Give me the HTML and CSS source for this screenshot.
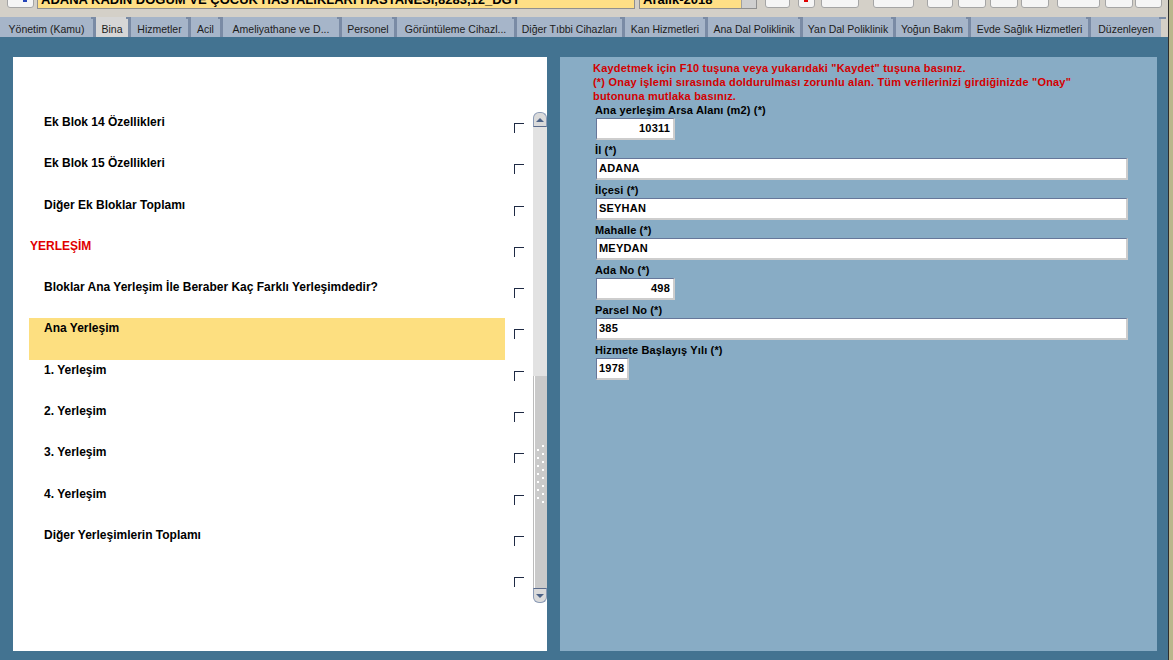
FILE: index.html
```html
<!DOCTYPE html>
<html lang="tr">
<head>
<meta charset="utf-8">
<title>Bina</title>
<link rel="stylesheet" href="styles.css">
</head>
<body>
<div class="app">
  <div class="work">
    <div class="toolbar">
      <div class="tb-btn tb-a"><span class="ico-blue"></span></div>
      <div class="tb-field tb-name">ADANA KADIN DOĞUM VE ÇOCUK HASTALIKLARI HASTANESİ,8283,12_DGY</div>
      <div class="tb-field tb-period"><span class="tb-val">Aralık-2018</span><span class="tb-drop"></span></div>
      <div class="tb-btn tb-b1"></div>
      <div class="tb-btn tb-b2"><span class="ico-red"></span></div>
      <div class="tb-btn tb-b3"></div>
      <div class="tb-btn tb-b4"></div>
      <div class="tb-btn tb-b5"><span class="ico-bar"></span></div>
      <div class="tb-btn tb-b6"><span class="ico-bar"></span></div>
      <div class="tb-btn tb-b7"></div>
      <div class="tb-btn tb-b8"></div>
      <div class="tb-btn tb-b9"></div>
      <div class="tb-btn tb-b10"></div>
      <div class="tb-btn tb-b11"></div>
    </div>
    <div class="tabbar">
      <div class="tabs">
        <div class="tab">Yönetim (Kamu)</div>
        <div class="tab tab-active">Bina</div>
        <div class="tab">Hizmetler</div>
        <div class="tab">Acil</div>
        <div class="tab">Ameliyathane ve D...</div>
        <div class="tab">Personel</div>
        <div class="tab">Görüntüleme Cihazl...</div>
        <div class="tab">Diğer Tıbbi Cihazları</div>
        <div class="tab">Kan Hizmetleri</div>
        <div class="tab">Ana Dal Poliklinik</div>
        <div class="tab">Yan Dal Poliklinik</div>
        <div class="tab">Yoğun Bakım</div>
        <div class="tab">Evde Sağlık Hizmetleri</div>
        <div class="tab">Düzenleyen</div>
      </div>
    </div>
    <div class="main">
      <section class="left-panel">
        <div class="list">
          <div class="row"><span class="row-label">Ek Blok 14 Özellikleri</span><span class="chk"></span></div>
          <div class="row"><span class="row-label">Ek Blok 15 Özellikleri</span><span class="chk"></span></div>
          <div class="row"><span class="row-label">Diğer Ek Bloklar Toplamı</span><span class="chk"></span></div>
          <div class="row"><span class="row-label row-section">YERLEŞİM</span><span class="chk"></span></div>
          <div class="row"><span class="row-label">Bloklar Ana Yerleşim İle Beraber Kaç Farklı Yerleşimdedir?</span><span class="chk"></span></div>
          <div class="row"><span class="row-label row-active">Ana Yerleşim</span><span class="chk"></span></div>
          <div class="row"><span class="row-label">1. Yerleşim</span><span class="chk"></span></div>
          <div class="row"><span class="row-label">2. Yerleşim</span><span class="chk"></span></div>
          <div class="row"><span class="row-label">3. Yerleşim</span><span class="chk"></span></div>
          <div class="row"><span class="row-label">4. Yerleşim</span><span class="chk"></span></div>
          <div class="row"><span class="row-label">Diğer Yerleşimlerin Toplamı</span><span class="chk"></span></div>
          <div class="row"><span class="row-label"></span><span class="chk"></span></div>
        </div>
        <div class="scrollbar">
          <div class="sb-btn sb-up"><span class="tri-up"></span></div>
          <div class="sb-track"></div>
          <div class="sb-thumb"><div class="grip"></div></div>
          <div class="sb-btn sb-down"><span class="tri-down"></span></div>
        </div>
      </section>
      <section class="right-panel">
        <p class="notice">Kaydetmek için F10 tuşuna veya yukarıdaki "Kaydet" tuşuna basınız.<br>(*) Onay işlemi sırasında doldurulması zorunlu alan. Tüm verilerinizi girdiğinizde "Onay"<br>butonuna mutlaka basınız.</p>
        <div class="field">
          <div class="label">Ana yerleşim Arsa Alanı (m2) (*)</div>
          <div class="input input-num w-short">10311</div>
        </div>
        <div class="field">
          <div class="label">İl (*)</div>
          <div class="input w-full">ADANA</div>
        </div>
        <div class="field">
          <div class="label">İlçesi (*)</div>
          <div class="input w-full">SEYHAN</div>
        </div>
        <div class="field">
          <div class="label">Mahalle (*)</div>
          <div class="input w-full">MEYDAN</div>
        </div>
        <div class="field">
          <div class="label">Ada No (*)</div>
          <div class="input input-num w-short">498</div>
        </div>
        <div class="field">
          <div class="label">Parsel No (*)</div>
          <div class="input w-full">385</div>
        </div>
        <div class="field">
          <div class="label">Hizmete Başlayış Yılı (*)</div>
          <div class="input w-year">1978</div>
        </div>
      </section>
    </div>
  </div>
  <div class="edge"></div>
</div>
</body>
</html>
```
FILE: styles.css
```css
html, body {
  margin: 0;
  padding: 0;
}
body {
  width: 1173px;
  height: 660px;
  overflow: hidden;
  font-family: "Liberation Sans", Arial, sans-serif;
  color: #000;
}
.app {
  display: flex;
  height: 660px;
}
.work {
  width: 1168px;
  display: flex;
  flex-direction: column;
  background: #d4d0c8;
}
.edge {
  width: 4px;
  border-left: 1px solid #2e2e2e;
  background: #b9b68c;
}

/* toolbar (mostly scrolled out of view) */
.toolbar {
  height: 10px;
  flex: none;
  overflow: hidden;
  display: flex;
  align-items: flex-end;
}
.tb-btn {
  position: relative;
  box-sizing: border-box;
  height: 20px;
  margin-bottom: 2px;
  background: #f5f5f5;
  border: 1px solid #a5a5a5;
  border-radius: 0 0 3px 3px;
}
.tb-field {
  box-sizing: border-box;
  height: 24px;
  margin-bottom: 1px;
  background: #fedf86;
  border: 1px solid #8f8f8f;
  border-top: 0;
  display: flex;
  align-items: flex-end;
  padding: 0 3px 2px;
  font-weight: bold;
  font-size: 13px;
  line-height: 13px;
  white-space: nowrap;
  overflow: hidden;
}
.tb-a { margin-left: 7px; width: 27px; }
.tb-name { margin-left: 3px; width: 598px; }
.tb-period { margin-left: 4px; width: 118px; padding-right: 0; }
.tb-val { flex: 1; }
.tb-drop {
  width: 14px;
  height: 22px;
  background: #cfcfcf;
  border-left: 1px solid #a0a0a0;
  margin-bottom: -2px;
}
.tb-b1 { margin-left: 8px; width: 25px; }
.tb-b2 { margin-left: 8px; width: 17px; }
.tb-b3 { margin-left: 6px; width: 38px; }
.tb-b4 { margin-left: 14px; width: 41px; }
.tb-b5 { margin-left: 13px; width: 26px; }
.tb-b6 { margin-left: 5px; width: 28px; }
.tb-b7 { margin-left: 4px; width: 28px; }
.tb-b8 { margin-left: 3px; width: 28px; }
.tb-b9 { margin-left: 8px; width: 43px; }
.tb-b10 { margin-left: 5px; width: 28px; }
.tb-b11 { margin-left: 2px; width: 27px; }
.ico-blue {
  position: absolute;
  left: 15px;
  bottom: 5px;
  width: 4px;
  height: 6px;
  background: #2444b8;
}
.ico-red {
  position: absolute;
  left: 5px;
  bottom: 5px;
  width: 4px;
  height: 6px;
  background: #e00000;
}
.ico-bar {
  position: absolute;
  left: 3px;
  right: 6px;
  bottom: 7px;
  height: 3px;
  background: #1a1a1a;
}

/* tabs */
.tabbar {
  height: 27px;
  flex: none;
  box-sizing: border-box;
  padding-top: 7px;
}
.tabs {
  display: inline-grid;
  grid-template-columns: 93px 32px 57px 29px 116px 52px 117px 105px 80px 92px 90px 72px 117px 70px;
  column-gap: 3px;
  background: #7a8ba5;
  height: 20px;
}
.tab {
  position: relative;
  box-sizing: border-box;
  height: 20px;
  padding-top: 4px;
  line-height: 16px;
  font-size: 10.5px;
  text-align: center;
  white-space: nowrap;
  overflow: visible;
  background: #a6b5c9;
  color: #1c1c1c;
}
.tab-active {
  background: #d6d6d6;
}
.tab::after {
  content: "";
  position: absolute;
  top: 0;
  right: -5px;
  width: 7px;
  height: 2px;
  background: #7a8ba5;
}

/* main */
.main {
  flex: 1;
  background: #437391;
  display: flex;
  gap: 13px;
  padding: 20px 11px 9px 13px;
  box-sizing: border-box;
}
.left-panel {
  width: 534px;
  background: #fff;
  display: flex;
}
.list {
  flex: 1;
  padding-top: 55px;
}
.row {
  display: flex;
  height: 41.3px;
}
.row-label {
  box-sizing: border-box;
  margin-left: 16px;
  width: 476px;
  padding: 3px 0 0 15px;
  font-weight: bold;
  font-size: 12px;
  line-height: 14px;
  white-space: nowrap;
}
.row-section {
  padding-left: 1px;
  color: #e00000;
}
.row-active {
  background: #fddf80;
}
.chk {
  box-sizing: border-box;
  margin: 11px 0 0 9px;
  width: 10px;
  height: 10px;
  border-top: 1px solid #1e2a44;
  border-left: 1px solid #1e2a44;
}

/* scrollbar */
.scrollbar {
  width: 14px;
  margin-top: 55px;
  height: 491px;
  display: flex;
  flex-direction: column;
}
.sb-btn {
  box-sizing: border-box;
  height: 15px;
  background: #dadada;
  border: 1px solid #8b9bb6;
  display: flex;
  align-items: center;
  justify-content: center;
}
.sb-up {
  border-radius: 6px 6px 0 0;
  border-bottom-color: #5a6b8c;
}
.sb-down {
  border-radius: 0 0 6px 6px;
  border-top-color: #5a6b8c;
}
.tri-up, .tri-down {
  width: 0;
  height: 0;
  border-left: 4px solid transparent;
  border-right: 4px solid transparent;
}
.tri-up { border-bottom: 4px solid #4d6387; }
.tri-down { border-top: 4px solid #4d6387; }
.sb-track {
  height: 249px;
  background: #e2e2e2;
}
.sb-thumb {
  box-sizing: border-box;
  height: 212px;
  background: #cacaca;
  border-left: 1px solid #bcbcbc;
  box-shadow: inset 1px 0 #fff;
  padding: 69px 0 0 3px;
}
.grip {
  width: 8px;
  height: 60px;
  background-image:
    radial-gradient(circle at 6px 1px, #fff 1px, transparent 1.5px),
    radial-gradient(circle at 1px 5px, #fff 1px, transparent 1.5px);
  background-size: 8px 8px;
}

/* right panel */
.right-panel {
  flex: 1;
  background: #88acc5;
  padding: 4px 0 0 33px;
  box-sizing: border-box;
}
.notice {
  margin: 0;
  color: #d40000;
  font-weight: bold;
  font-size: 11px;
  line-height: 14px;
  letter-spacing: 0.2px;
  white-space: nowrap;
}
.field {
  height: 40px;
}
.label {
  margin-left: 2px;
  font-weight: bold;
  font-size: 11px;
  line-height: 14px;
  letter-spacing: 0.15px;
  white-space: nowrap;
}
.input {
  box-sizing: border-box;
  margin: 1px 0 0 3px;
  height: 22px;
  background: #fff;
  border-top: 1px solid #66779a;
  border-left: 1px solid #66779a;
  border-right: 2px solid #cdcdcd;
  border-bottom: 2px solid #cdcdcd;
  padding: 0 3px 0 2px;
  font-weight: bold;
  font-size: 11px;
  line-height: 19px;
  letter-spacing: 0.2px;
  white-space: nowrap;
}
.input-num { text-align: right; }
.w-short { width: 79px; }
.w-full { width: 532px; }
.w-year { width: 33px; }
```
